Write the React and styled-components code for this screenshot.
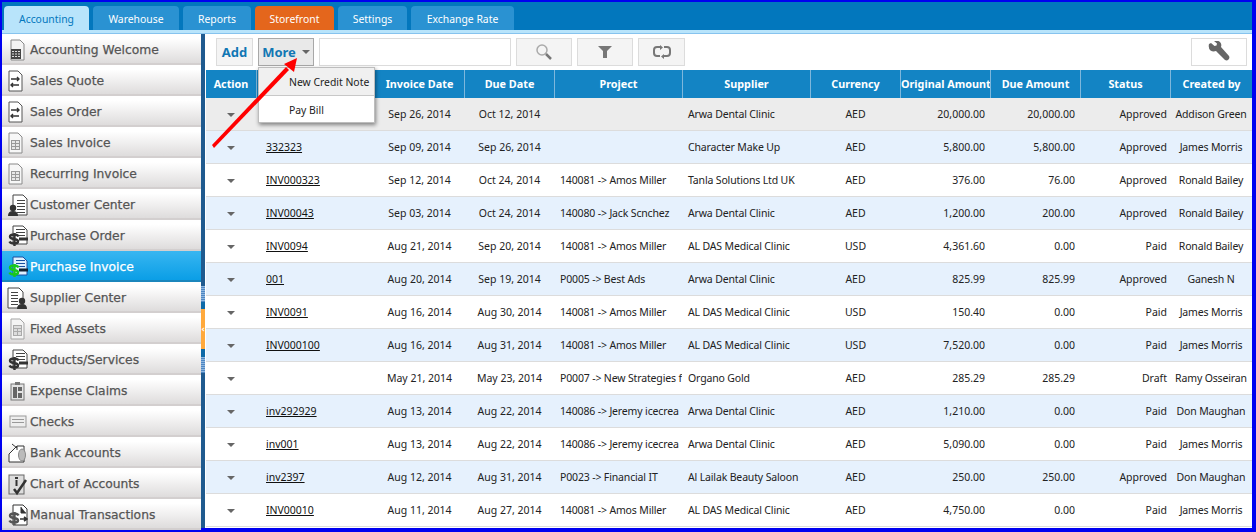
import React from "react";
import styled, { createGlobalStyle } from "styled-components";

const Global = createGlobalStyle`
  html, body { margin: 0; padding: 0; overflow: hidden; background: #0000f0; }
  * { box-sizing: border-box; }
`;
const UI = `"DejaVu Sans", Verdana, sans-serif`;
const Cell = `"Noto Sans", "Liberation Sans", sans-serif`;

const Frame = styled.div`
  position: relative; width: 1256px; height: 532px; padding: 2px 4px 4px 2px;
  display: flex; flex-direction: column; background: #0000f0; overflow: hidden;
`;
const TabBar = styled.div`
  height: 28px; flex: none; background: #0277bd; display: flex; align-items: flex-end; gap: 4px; padding-left: 2px;
`;
const Tab = styled.div`
  height: 24px; width: ${p => p.$w}px; border-radius: 4px 4px 0 0; display: flex; align-items: center; justify-content: center;
  font: 10.4px ${Cell}; padding-top: 1px;
  color: ${p => p.$active ? "#0277bd" : "#fff"};
  background: ${p => p.$active ? "#b8e4fb" : p.$orange ? "#e4661c" : "#2a92d2"};
`;
const Strip = styled.div`
  height: 4px; flex: none; background: #b8e4fb; border-bottom: 1px solid #86c3ee;
`;
const Body = styled.div`flex: 1; min-height: 0; display: flex;`;
const Sidebar = styled.div`width: 199px; flex: none; display: flex; flex-direction: column; background: #d6d2d2;`;
const NavItem = styled.div`
  height: 31px; flex: none; display: flex; align-items: center; gap: 2px; padding: 2px 0 0 4px;
  font: 12.3px ${UI}; -webkit-text-stroke: 0.25px currentColor;
  color: ${p => p.$active ? "#fff" : "#555"};
  background: ${p => p.$active ? "linear-gradient(#38b6f1, #0a9ee6)" : "linear-gradient(#fff 15%, #dedcdc)"};
  border-bottom: 2px solid ${p => p.$active ? "#1b86bc" : "#d3cfcf"};
`;
const Splitter = styled.div`width: 4px; flex: none; background: #1f5a8f; display: flex; flex-direction: column;`;
const SplitGap = styled.div`height: ${p => p.$h}px; flex: none; background: ${p => p.$c};`;
const Grip = styled.div`
  height: ${p => p.$h}px; flex: none;
  background: repeating-linear-gradient(#8fb7e0 0 1px, #4d86c2 1px 2px);
`;
const Handle = styled.div`
  height: 40px; flex: none; background: #ffa93c; color: #fff; font: bold 9px ${UI}; display: flex; align-items: center; justify-content: center;
`;
const Main = styled.div`flex: 1; min-width: 0; background: #fff; display: flex; flex-direction: column; padding-left: 1px;`;
const Toolbar = styled.div`height: 36px; flex: none; display: flex; align-items: flex-start; gap: 5px; padding: 4px 5px 0 10px;`;
const ToolBtn = styled.div`
  height: 28px; width: ${p => p.$w}px; flex: none; display: flex; align-items: center; justify-content: center; gap: 6px;
  border: 1px solid ${p => p.$open ? "#a8a8a8" : "#dcdcdc"};
  background: ${p => p.$open ? "#e9e9e9" : p.$plain ? "#fff" : "#f4f4f4"};
  font: bold 13px ${Cell}; color: #1177b4;
`;
const MoreWrap = styled.div`position: relative; flex: none;`;
const Caret = styled.span`
  width: 0; height: 0; border-left: 4px solid transparent; border-right: 4px solid transparent; border-top: 4px solid ${p => p.$c || "#666"};
  display: inline-block; vertical-align: middle;
`;
const Search = styled.div`height: 28px; width: 192px; flex: none; border: 1px solid #dcdcdc; background: #fff;`;
const Push = styled.div`flex: 1;`;
const Menu = styled.div`
  position: absolute; left: 0; top: 29px; width: 117px; z-index: 3; background: #fff; border: 1px solid #bdbdbd;
  box-shadow: 1px 2px 4px rgba(0,0,0,.45); font: 10.4px ${Cell}; color: #222;
`;
const MenuItem = styled.div`
  height: 27px; display: flex; align-items: center; padding: ${p => p.$line ? "2px" : "0"} 0 0 30px;
  background: ${p => p.$hover ? "#f0f0f0" : "#fff"};
  border-top: ${p => p.$line ? "1px solid #c8c8c8" : "0"};
`;
const Table = styled.table`
  width: 1046px; table-layout: fixed; border-collapse: separate; border-spacing: 0; font: 10.5px ${Cell}; color: #222;
`;
const Th = styled.th`
  height: 28px; padding: 0 0 1px; background: #1384c4; color: #fff; text-align: center; white-space: nowrap; overflow: hidden;
  font: bold 10.8px ${Cell};
  border-left: 1px solid #7db7dc;
  &:first-child { border-left: 0; }
`;
const Tr = styled.tr`
  background: ${p => p.$bg};
  td { border-bottom: 1px solid #dcdcdc; }
`;
const Td = styled.td`
  height: 33px; padding: ${p => p.$pad || "0"}; text-align: ${p => p.$al || "left"}; white-space: nowrap; overflow: hidden;
  letter-spacing: ${p => p.$tight ? "-0.15px" : "0"};
`;
const InvLink = styled.span`text-decoration: underline; color: #111;`;
const ArrowLayer = styled.svg`position: absolute; left: 0; top: 0; z-index: 5; pointer-events: none;`;
const IconBox = styled.svg`width: 22px; height: 24px; flex: none;`;

const Sheet = ({ fill = "#fff", stroke = "#555" }) => (
  <path d="M5 2h9l4 4v16H5z" fill={fill} stroke={stroke} />
);
const Lines = ({ c = "#777", x = 8, y = 8, n = 4, w = 8 }) => (
  <g stroke={c}>{Array.from({ length: n }, (_, i) => <path key={i} d={`M${x} ${y + i * 3}.5h${w}`} />)}</g>
);
const Person = ({ x, y }) => (
  <g fill="#333"><circle cx={x} cy={y} r="3.2" /><path d={`M${x - 5} ${y + 8}q0-5 5-5t5 5z`} /></g>
);
const Dollar = ({ c = "#333" }) => (
  <path transform="translate(1.500 0)" d="M11 12.500q-1-2-4.500-2-4 0-4 2 0 2 4 2.500t4 2.500q0 2-4 2-3.500 0-4.500-2M7 9v13" fill="none" stroke={c} strokeWidth="2.400" />
);
const icons = {
  calc: <><Sheet fill="#f4f4f4" stroke="#888" /><rect x="5" y="11" width="10" height="10" fill="#444" /><path d="M6 13.500h8M6 16h8M6 18.500h8" stroke="#ddd" strokeDasharray="2 1" /></>,
  swap: <g transform="translate(-2 0)"><Sheet /><path d="M7 10h8m-2-2 2 2-2 2M15 16H7m2-2-2 2 2 2" stroke="#333" strokeWidth="1.400" fill="none" /></g>,
  table: <g transform="translate(-2 0)"><Sheet fill="#f7f7f7" stroke="#8a8a8a" /><rect x="7.500" y="9.500" width="8" height="9" fill="#e8e8e8" stroke="#999" /><path d="M7.500 12.500h8M7.500 15.500h8M11.500 9.500v9" stroke="#999" /></g>,
  customer: <><path d="M7 2h10l4 4v16H7z" fill="#fff" stroke="#444" /><Lines x={11} y={7} n={5} w={8} c="#444" /><Person x={7} y={15} /></>,
  purchase: <><path d="M7 2h10l4 4v14H7z" fill="#fff" stroke="#444" /><Lines x={10} y={5} n={3} w={9} c="#444" /><path d="M13 15h9" stroke="#333" strokeWidth="3" /><Dollar /></>,
  active: <><path d="M7 2h10l4 4v14H7z" fill="#dff0ff" stroke="#1a4fa0" /><Lines x={10} y={5} n={3} w={9} c="#1a4fa0" /><path d="M13 15h9" stroke="#123" strokeWidth="3" /><Dollar c="#19c81e" /></>,
  supplier: <><path d="M2 2h11l4 4v16H2z" fill="#fff" stroke="#444" /><Lines x={5} y={6} n={5} w={7} c="#444" /><Person x={16} y={15} /></>,
  fixed: <><Sheet fill="#f4f4f4" stroke="#a5a5a5" /><rect x="7.500" y="8.500" width="8" height="10" fill="#ddd" stroke="#aaa" /><path d="M7.500 11.500h8M7.500 14.500h8M11.500 11.500v7" stroke="#aaa" /></>,
  expense: <><rect x="5" y="5" width="13" height="16" fill="#e4e4e4" stroke="#777" /><rect x="9" y="3" width="5" height="3" fill="#777" /><rect x="7" y="8" width="4" height="11" fill="#666" /><rect x="12" y="8" width="4" height="4" fill="#666" /><rect x="12" y="14" width="4" height="5" fill="#666" /></>,
  checks: <><rect x="4" y="6" width="16" height="11" fill="#eee" stroke="#999" /><path d="M6 9.500h12M6 12.500h12" stroke="#999" /></>,
  bank: <><path d="M3 13l8-8h7v16H3z" fill="#fff" stroke="#333" /><path d="M11 5v4M6 3l5 4" stroke="#333" /><ellipse cx="16" cy="14" rx="3.500" ry="6" fill="#bbb" stroke="#888" /></>,
  chart: <><rect x="3" y="3" width="15" height="19" fill="#ddd" stroke="#666" /><path d="M9 6h3M10.500 8v6" stroke="#333" strokeWidth="2" /><path d="M8 17l3 4 9-13" fill="none" stroke="#333" strokeWidth="2.500" /></>,
  manual: <><path d="M7 2h10l4 4v16H7z" fill="#fff" stroke="#333" /><path d="M15 4v6h5" fill="#333" stroke="#333" /><path d="M14 16h6m-2-2 3 2-3 2" stroke="#333" strokeWidth="1.600" fill="none" /><Dollar c="#555" /></>,
};

const navItems = [
  ["Accounting Welcome", "calc"], ["Sales Quote", "swap"], ["Sales Order", "swap"], ["Sales Invoice", "table"],
  ["Recurring Invoice", "table"], ["Customer Center", "customer"], ["Purchase Order", "purchase"],
  ["Purchase Invoice", "active", true], ["Supplier Center", "supplier"], ["Fixed Assets", "fixed"],
  ["Products/Services", "purchase"], ["Expense Claims", "expense"], ["Checks", "checks"],
  ["Bank Accounts", "bank"], ["Chart of Accounts", "chart"], ["Manual Transactions", "manual"],
];
const tabs = [["Accounting", 85, "a"], ["Warehouse", 86], ["Reports", 68], ["Storefront", 79, "o"], ["Settings", 69], ["Exchange Rate", 103]];
const cols = [
  ["Action", 50], ["", 118], ["Invoice Date", 90], ["Due Date", 90], ["Project", 128], ["Supplier", 128],
  ["Currency", 90], ["Original Amount", 90], ["Due Amount", 90], ["Status", 90], ["Created by", 82],
];
const rows = [
  ["", "Sep 26, 2014", "Oct 12, 2014", "", "Arwa Dental Clinic", "AED", "20,000.00", "20,000.00", "Approved", "Addison Green"],
  ["332323", "Sep 09, 2014", "Sep 26, 2014", "", "Character Make Up", "AED", "5,800.00", "5,800.00", "Approved", "James Morris"],
  ["INV000323", "Sep 12, 2014", "Oct 24, 2014", "140081 -> Amos Miller", "Tanla Solutions Ltd UK", "AED", "376.00", "76.00", "Approved", "Ronald Bailey"],
  ["INV00043", "Sep 03, 2014", "Oct 24, 2014", "140080 -> Jack Scnchez", "Arwa Dental Clinic", "AED", "1,200.00", "200.00", "Approved", "Ronald Bailey"],
  ["INV0094", "Aug 21, 2014", "Sep 20, 2014", "140081 -> Amos Miller", "AL DAS Medical Clinic", "USD", "4,361.60", "0.00", "Paid", "Ronald Bailey"],
  ["001", "Aug 20, 2014", "Sep 19, 2014", "P0005 -> Best Ads", "Arwa Dental Clinic", "AED", "825.99", "825.99", "Approved", "Ganesh N"],
  ["INV0091", "Aug 16, 2014", "Aug 30, 2014", "140081 -> Amos Miller", "AL DAS Medical Clinic", "USD", "150.40", "0.00", "Paid", "James Morris"],
  ["INV000100", "Aug 16, 2014", "Aug 31, 2014", "140081 -> Amos Miller", "AL DAS Medical Clinic", "USD", "7,520.00", "0.00", "Paid", "James Morris"],
  ["", "May 21, 2014", "May 23, 2014", "P0007 -> New Strategies f", "Organo Gold", "AED", "285.29", "285.29", "Draft", "Ramy Osseiran"],
  ["inv292929", "Aug 13, 2014", "Aug 22, 2014", "140086 -> Jeremy icecrea", "Arwa Dental Clinic", "AED", "1,210.00", "0.00", "Paid", "Don Maughan"],
  ["inv001", "Aug 13, 2014", "Aug 22, 2014", "140086 -> Jeremy icecrea", "Arwa Dental Clinic", "AED", "5,090.00", "0.00", "Paid", "James Morris"],
  ["inv2397", "Aug 12, 2014", "Aug 31, 2014", "P0023 -> Financial IT", "Al Lailak Beauty Saloon", "AED", "250.00", "250.00", "Approved", "Don Maughan"],
  ["INV00010", "Aug 11, 2014", "Aug 27, 2014", "140081 -> Amos Miller", "AL DAS Medical Clinic", "AED", "4,750.00", "0.00", "Paid", "James Morris"],
];
const rowBg = i => (i === 0 ? "#ececec" : i % 2 ? "#e6f1fd" : "#fff");

export default function App() {
  return (
    <Frame>
      <Global />
      <TabBar>
        {tabs.map(([t, w, k]) => <Tab key={t} $w={w} $active={k === "a"} $orange={k === "o"}>{t}</Tab>)}
      </TabBar>
      <Strip />
      <Body>
        <Sidebar>
          {navItems.map(([t, ic, a]) => (
            <NavItem key={t} $active={a}>
              <IconBox viewBox="0 0 22 24">{icons[ic]}</IconBox>{t}
            </NavItem>
          ))}
        </Sidebar>
        <Splitter>
          <SplitGap $h={252} $c="#1f5a8f" />
          <Grip $h={16} />
          <SplitGap $h={7} $c="#0e6aa8" />
          <Handle>‹</Handle>
          <SplitGap $h={8} $c="#0e6aa8" />
          <Grip $h={16} />
          <SplitGap $h={155} $c="#1f5a8f" />
        </Splitter>
        <Main>
          <Toolbar>
            <ToolBtn $w={37}>Add</ToolBtn>
            <MoreWrap>
              <ToolBtn $w={56} $open>More <Caret /></ToolBtn>
              <Menu>
                <MenuItem $hover>New Credit Note</MenuItem>
                <MenuItem $line>Pay Bill</MenuItem>
              </Menu>
            </MoreWrap>
            <Search />
            <ToolBtn $w={56}>
              <svg width="18" height="18" viewBox="0 0 18 18"><circle cx="7" cy="7" r="5" fill="none" stroke="#aaa" strokeWidth="1.500" /><path d="M11 11l5 5" stroke="#777" strokeWidth="2.500" /></svg>
            </ToolBtn>
            <ToolBtn $w={56}>
              <svg width="14" height="12" viewBox="0 0 14 12"><path d="M0 0h14L9 5v7H5V5z" fill="#777" /></svg>
            </ToolBtn>
            <ToolBtn $w={47}>
              <svg width="20" height="14" viewBox="0 0 20 14"><path d="M8 2H5Q2 2 2 5v3q0 3 3 3h3M12 11h3q3 0 3-3V5q0-3-3-3h-3" fill="none" stroke="#777" strokeWidth="2" /><path d="M8 0l3 2.500L8 5zM12 9l-3 2.500 3 2.500z" fill="#777" /></svg>
            </ToolBtn>
            <Push />
            <ToolBtn $w={56} $plain>
              <svg width="22" height="22" viewBox="0 0 22 22"><path d="M3 2l3.500 3 2-.5.5-2L6 0q4-1 6 1 2 2 1 5l8 9q1 2-.5 3.500T17 19L8 10q-3 1-5.500-.5Q0 7 1 3z" fill="#666" /></svg>
            </ToolBtn>
          </Toolbar>
          <Table>
            <colgroup>{cols.map(([h, w], i) => <col key={i} width={w} />)}</colgroup>
            <thead><tr>{cols.map(([h], i) => <Th key={i}>{h}</Th>)}</tr></thead>
            <tbody>
              {rows.map((r, i) => (
                <Tr key={i} $bg={rowBg(i)}>
                  <Td $al="center"><Caret /></Td>
                  <Td $pad="0 0 0 10px"><InvLink>{r[0]}</InvLink></Td>
                  <Td $al="center" $pad="0 0 0 1px">{r[1]}</Td>
                  <Td $al="center" $pad="0 0 0 1px">{r[2]}</Td>
                  <Td $pad="0 0 0 6px" $tight>{r[3]}</Td>
                  <Td $pad="0 0 0 6px" $tight>{r[4]}</Td>
                  <Td $al="center" $pad="0 0 0 1px">{r[5]}</Td>
                  <Td $al="right" $pad="0 5px 0 0">{r[6]}</Td>
                  <Td $al="right" $pad="0 5px 0 0">{r[7]}</Td>
                  <Td $al="right" $pad="0 3px 0 0">{r[8]}</Td>
                  <Td $al="center" $tight>{r[9]}</Td>
                </Tr>
              ))}
            </tbody>
          </Table>
        </Main>
      </Body>
      <ArrowLayer width="1256" height="532" viewBox="0 0 1256 532">
        <path d="M212 145L214 148L289 70L286 67Z" fill="#f00" />
        <path d="M297 58L284 64L294 72Z" fill="#f00" />
      </ArrowLayer>
    </Frame>
  );
}
